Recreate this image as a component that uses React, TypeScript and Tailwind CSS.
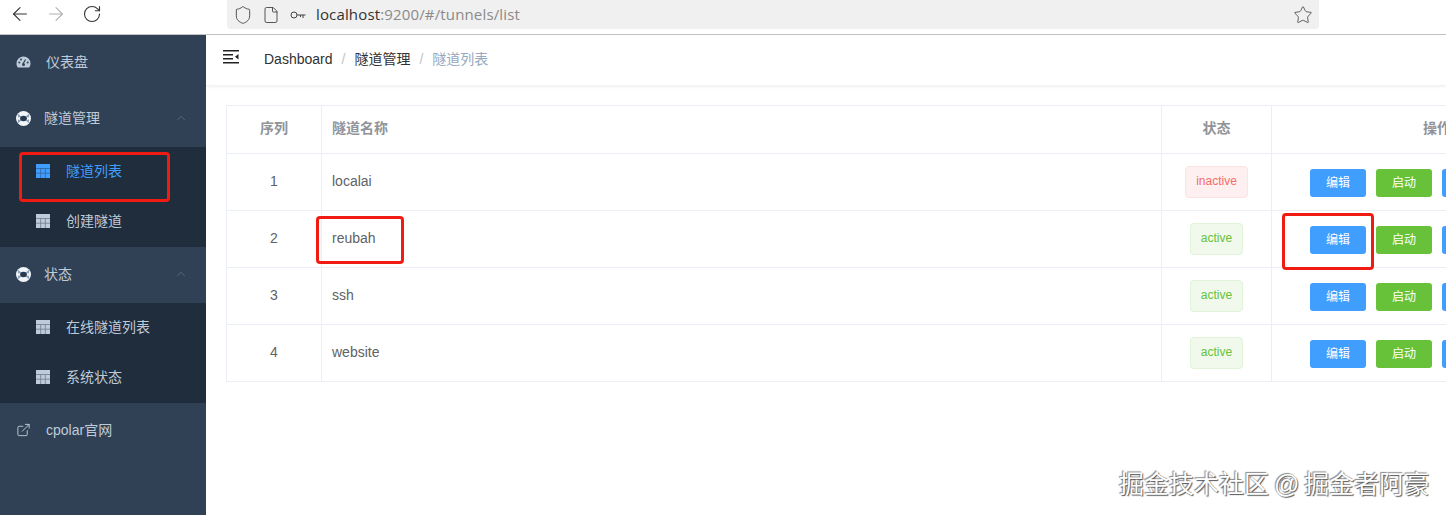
import { ArrowLeft, ArrowRight, RotateCw, Shield, File, Star, ChevronUp, ExternalLink } from 'lucide-react';

const cjk = '"Liberation Sans","Noto Sans CJK SC",sans-serif';

function GaugeIcon() {
    return (
        <svg width="15" height="12" viewBox="0 0 15 12" className="fill-[#bfcbd9]">
            <path d="M7.5 0.5A7 7 0 0 0 .5 7.5c0 1.500.5 2.900 1.300 4h11.400c.8-1.100 1.300-2.500 1.300-4a7 7 0 0 0-7-7z" />
            <circle cx="7.5" cy="8.500" r="1.500" fill="#304156" />
            <path d="M7 8 L9.500 3.500" stroke="#304156" strokeWidth="1.200" />
            <circle cx="3.300" cy="6.500" r="1" fill="#304156" />
            <circle cx="5" cy="3.500" r="1" fill="#304156" />
            <circle cx="11.700" cy="6.500" r="1" fill="#304156" />
        </svg>
    );
}

function RingIcon() {
    return (
        <svg width="15" height="15" viewBox="0 0 15 15">
            <circle cx="7.500" cy="7.500" r="7.500" fill="#f2f5f8" />
            <path d="M1.800 2.500 L5.500 5.800 L2 6.500z M13.200 2.500 L9.500 5.800 L13 6.500z M1.800 12.500 L5.500 9.200 L2 8.500z M13.200 12.500 L9.500 9.200 L13 8.500z" fill="#8ea4bb" />
            <ellipse cx="7.500" cy="7.500" rx="3.400" ry="2.800" fill="#2a3a4e" />
        </svg>
    );
}

function TableIcon({ color }: { color: string }) {
    return (
        <svg width="14" height="14" viewBox="0 0 14 14">
            <rect width="14" height="14" fill={color} />
            <path d="M0 4.500h14M0 9.200h14M4.700 4.500v9.500M9.300 4.500v9.500" stroke="#1f2d3d" strokeWidth="0.800" opacity="0.500" />
        </svg>
    );
}

function MenuFoldIcon() {
    return (
        <svg width="16" height="14" viewBox="0 0 16 14" className="fill-[#222]">
            <rect x="0" y="0" width="16" height="1.500" />
            <rect x="0" y="4" width="10" height="1.500" />
            <rect x="0" y="8" width="10" height="1.500" />
            <rect x="0" y="12" width="16" height="1.500" />
            <path d="M15.500 4v5.500L12 6.800z" />
        </svg>
    );
}

function MainItem({ icon, label, arrow }: { icon: React.ReactNode; label: string; arrow?: boolean }) {
    return (
        <div className="h-14 flex items-center pl-4 pr-[18px] pb-[2px] text-[14px] text-[#bfcbd9]">
            <span className="w-[15px] flex justify-center">{icon}</span>
            {/* collapsible items sit 2px further left than plain links */}
            <span className={`${arrow ? 'ml-[13px]' : 'ml-[15px]'} flex-1`}>{label}</span>
            {arrow && <ChevronUp size={14} strokeWidth={1} className="text-[#6f8096]" />}
        </div>
    );
}

function SubItem({ label, active }: { label: string; active?: boolean }) {
    return (
        <div className={`h-[50px] flex items-center pl-9 pb-[2px] text-[14px] ${active ? 'text-[#409eff]' : 'text-[#bfcbd9]'}`}>
            <TableIcon color={active ? '#409eff' : '#bfcbd9'} />
            <span className="ml-4">{label}</span>
        </div>
    );
}

const rows = [
    { id: 1, name: 'localai', status: 'inactive' },
    { id: 2, name: 'reubah', status: 'active' },
    { id: 3, name: 'ssh', status: 'active' },
    { id: 4, name: 'website', status: 'active' },
];

function Btn({ color, label }: { color: string; label: string }) {
    return (
        <span className={`w-14 h-7 shrink-0 rounded-[3px] flex items-center justify-center text-white text-[12px] ${color}`}>
            {label}
        </span>
    );
}

export default function App() {
    return (
        <div className="relative w-[1446px] h-[515px] overflow-hidden bg-white flex flex-col" style={{ fontFamily: cjk }}>
            {/* browser bar */}
            <div className="h-[35px] shrink-0 flex items-start border-b border-[#c4c4c4] bg-white">
                <div className="flex items-center h-[28px] pl-[9px] text-[#333]">
                    <ArrowLeft size={22} strokeWidth={1.200} />
                    <ArrowRight size={22} strokeWidth={1.200} className="ml-[14px] text-[#b0b0b0]" />
                    <RotateCw size={20} strokeWidth={1.300} className="ml-[15px]" />
                </div>
                <div className="ml-[125px] w-[1092px] h-[29px] bg-[#f0f0f0] rounded-b-[4px] flex items-center pl-[6px] pr-[6px] text-[#444]">
                    <Shield size={20} strokeWidth={1.100} />
                    <File size={18} strokeWidth={1.200} className="ml-[9px]" />
                    <svg width="16" height="8" viewBox="0 0 16 8" className="ml-[10px] fill-none stroke-[#444]">
                        <circle cx="4" cy="4" r="3" />
                        <path d="M7 4h8.500M13 4v3M10.500 4v2" />
                    </svg>
                    <span className="ml-[10px] text-[15px] tracking-[0.15px] text-[#333] font-['Open_Sans']">localhost<span className="text-[#8a8a8a]">:9200/#/tunnels/list</span></span>
                    <Star size={20} strokeWidth={1} className="ml-auto" />
                </div>
            </div>

            <div className="flex flex-1 min-h-0">
                {/* sidebar */}
                <aside className="w-[206px] shrink-0 bg-[#304156]">
                    <MainItem icon={<GaugeIcon />} label="仪表盘" />
                    <MainItem icon={<RingIcon />} label="隧道管理" arrow />
                    <div className="bg-[#1f2d3d]">
                        <SubItem label="隧道列表" active />
                        <SubItem label="创建隧道" />
                    </div>
                    <MainItem icon={<RingIcon />} label="状态" arrow />
                    <div className="bg-[#1f2d3d]">
                        <SubItem label="在线隧道列表" />
                        <SubItem label="系统状态" />
                    </div>
                    <MainItem icon={<ExternalLink size={16} strokeWidth={1.500} />} label="cpolar官网" />
                </aside>

                {/* main */}
                <main className="flex-1 min-w-0">
                    <header className="h-[51px] flex items-center pl-[17px] pb-[2px] border-b border-[#f0f2f5] shadow-[0_1px_3px_rgba(0,21,41,0.06)]">
                        <span className="-mt-[5px]"><MenuFoldIcon /></span>
                        <div className="ml-[25px] flex items-center text-[14px]">
                            <span className="text-[#303133]">Dashboard</span>
                            <span className="mx-[9px] text-[#c0c4cc]">/</span>
                            <span className="text-[#303133]">隧道管理</span>
                            <span className="mx-[9px] text-[#c0c4cc]">/</span>
                            <span className="text-[#97a8be]">隧道列表</span>
                        </div>
                    </header>

                    <div className="pt-[19px] pl-5">
                        <table className="table-fixed w-[1378px] border-collapse border border-[#ebeef5] text-[14px] text-[#606266]">
                            <thead>
                                <tr className="h-12 text-[#909399] font-bold">
                                    <th className="w-[95px] border border-[#ebeef5] text-center pb-[2px]">序列</th>
                                    <th className="w-[840px] border border-[#ebeef5] text-left pl-[10px] pb-[2px]">隧道名称</th>
                                    <th className="w-[110px] border border-[#ebeef5] text-center pb-[2px]">状态</th>
                                    <th className="border border-[#ebeef5] pb-[2px] text-left pl-[151px]">操作</th>
                                </tr>
                            </thead>
                            <tbody>
                                {rows.map((r) => (
                                    <tr key={r.id} className="h-[57px]">
                                        <td className="border border-[#ebeef5] text-center pb-[2px]">{r.id}</td>
                                        <td className="border border-[#ebeef5] pl-[10px] pb-[2px]">{r.name}</td>
                                        <td className="border border-[#ebeef5] text-center">
                                            {r.status === 'inactive' ? (
                                                <span className="inline-flex items-center h-8 px-[10px] pb-[2px] rounded-[4px] border border-[#fde2e2] bg-[#fef0f0] text-[12px] text-[#f56c6c]">inactive</span>
                                            ) : (
                                                <span className="inline-flex items-center h-8 px-[10px] pb-[2px] rounded-[4px] border border-[#e1f3d8] bg-[#f0f9eb] text-[12px] text-[#67c23a]">active</span>
                                            )}
                                        </td>
                                        <td className="border border-[#ebeef5]">
                                            <div className="flex gap-[10px] pl-[38px] pt-[1px]">
                                                <Btn color="bg-[#409eff]" label="编辑" />
                                                <Btn color="bg-[#67c23a]" label="启动" />
                                                <Btn color="bg-[#409eff]" label="详情" />
                                            </div>
                                        </td>
                                    </tr>
                                ))}
                            </tbody>
                        </table>
                    </div>
                </main>
            </div>

            {/* red annotation boxes */}
            <div className="absolute left-[19px] top-[152px] w-[151px] h-[50px] border-[3px] border-[#f01c14] rounded-[4px]" />
            <div className="absolute left-[316px] top-[216px] w-[88px] h-[48px] border-[3px] border-[#f01c14] rounded-[4px]" />
            <div className="absolute left-[1282px] top-[213px] w-[92px] h-[57px] border-[3px] border-[#f01c14] rounded-[4px]" />

            {/* watermark */}
            <div className="absolute left-[1119px] top-[469px] text-[25px] leading-[30px] whitespace-pre text-white [word-spacing:-2px] [text-shadow:1px_1px_1px_#555,-1px_-1px_1px_#888]">掘金技术社区 @ 掘金者阿豪</div>
        </div>
    );
}
